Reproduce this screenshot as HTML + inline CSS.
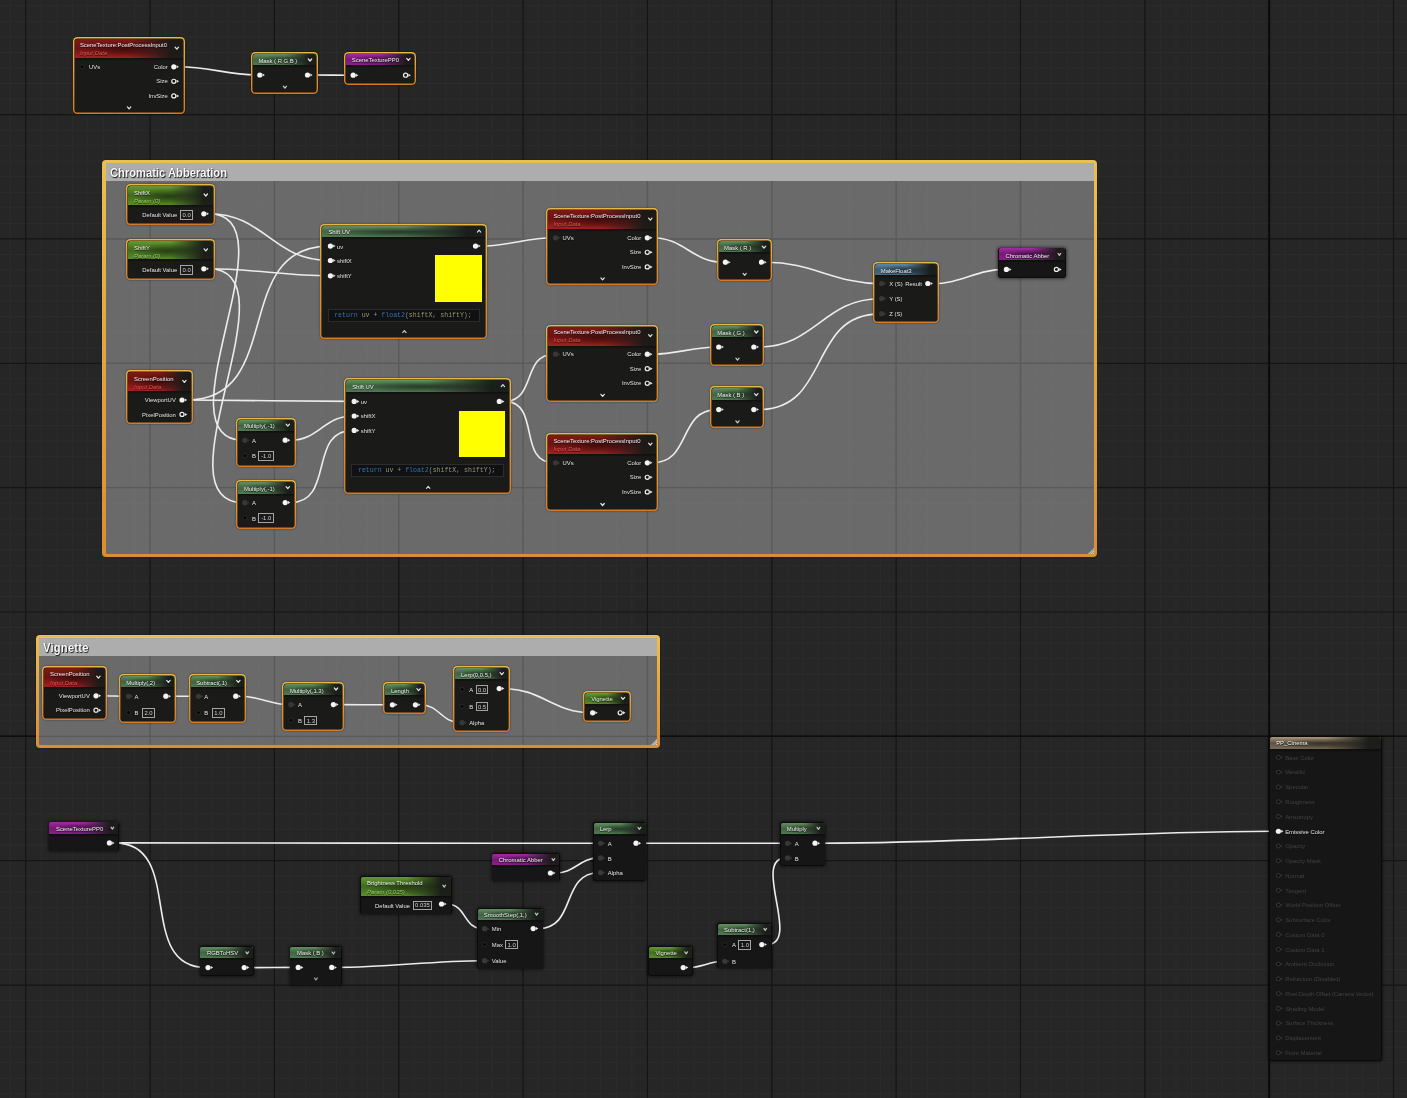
<!DOCTYPE html>
<html><head><meta charset="utf-8"><title>Material Graph</title><style>
html,body{margin:0;padding:0}
body{width:1407px;height:1098px;background:#262626;position:relative;overflow:hidden;font-family:"Liberation Sans",sans-serif}
.layer{position:absolute;left:0;top:0}
.soft{filter:blur(.3px)}
.n{position:absolute;box-sizing:border-box;border-radius:3px;background:#0b0b0b;box-shadow:0 0 3px 1px rgba(0,0,0,.5)}
.n .in{position:absolute;left:.7px;top:.7px;right:.7px;bottom:.7px;background:#161616;border-radius:2px;overflow:hidden}
.n.sel{background:linear-gradient(180deg,#e6b648,#dc9838 50%,#cf7b28);border-radius:4.5px;box-shadow:0 0 2px rgba(0,0,0,.5)}
.n.sel .in{left:2px;top:2px;right:2px;bottom:2px;background:#1a1b19;border-radius:2.5px;box-shadow:0 0 0 .6px #20140a}
.hd{position:absolute;left:0;top:0;right:0}
.hd:after{content:"";position:absolute;left:0;right:0;bottom:-3px;height:3px;background:linear-gradient(180deg,rgba(0,0,0,.45),rgba(0,0,0,0))}
.t{position:absolute;font-size:5.9px;line-height:8px;height:8px;white-space:nowrap;color:#e4e4e4;text-shadow:0 .5px .5px rgba(0,0,0,.7)}
.t.r{width:200px;text-align:right}
.t.c{width:200px;text-align:center}
.t.ti{color:#f0f0f0}
.t.sub{font-style:italic}
.t.red{color:#d85a50}
.t.grn{color:#9bc865}
.t.dis{color:#414141;text-shadow:none}
.bx{position:absolute;box-sizing:border-box;border:.7px solid #a4a4a4;font-size:5.9px;line-height:7.2px;color:#cfcfcf;text-align:center;white-space:nowrap}
.code{position:absolute;box-sizing:border-box;background:#101112;border:.8px solid #2c2c2c;font-family:"Liberation Mono",monospace;font-size:6.55px;line-height:12px;color:#9c9474;white-space:pre;padding-left:5.6px}
.code .kw{color:#3573b0}
.cm{position:absolute;box-sizing:border-box;border-radius:4px;background:linear-gradient(180deg,#ebbf52,#e6a840 40%,#dc8c34);box-shadow:0 0 2px rgba(0,0,0,.4);filter:blur(.3px)}
.cmi{position:absolute;left:3.4px;top:3.3px;right:3.4px;bottom:3.4px;background:#6a6a6a;overflow:hidden;border-radius:1px}
.cmt{position:absolute;left:0;top:0;right:0;height:17.2px;background:#adadad}
.cmtitle{position:absolute;left:7.2px;top:5.7px;font-size:12.6px;line-height:15px;font-weight:bold;color:#fbfbfb;white-space:nowrap;text-shadow:.9px 1.3px 1px rgba(0,0,0,.9),0 0 1.2px rgba(0,0,0,.55);transform-origin:0 50%;transform:scaleX(.888)}
.grip{position:absolute;right:3.6px;bottom:3.6px}
</style></head><body>
<svg class="layer" width="1407" height="1098"><path d="M10.16 0V1098M41.24 0V1098M56.79 0V1098M72.33 0V1098M87.88 0V1098M103.42 0V1098M118.96 0V1098M134.51 0V1098M165.59 0V1098M181.14 0V1098M196.68 0V1098M212.23 0V1098M227.77 0V1098M243.31 0V1098M258.86 0V1098M289.94 0V1098M305.49 0V1098M321.03 0V1098M336.57 0V1098M352.12 0V1098M367.66 0V1098M383.21 0V1098M414.29 0V1098M429.84 0V1098M445.38 0V1098M460.93 0V1098M476.47 0V1098M492.01 0V1098M507.56 0V1098M538.64 0V1098M554.19 0V1098M569.73 0V1098M585.27 0V1098M600.82 0V1098M616.36 0V1098M631.91 0V1098M662.99 0V1098M678.54 0V1098M694.08 0V1098M709.62 0V1098M725.17 0V1098M740.71 0V1098M756.26 0V1098M787.34 0V1098M802.89 0V1098M818.43 0V1098M833.98 0V1098M849.52 0V1098M865.06 0V1098M880.61 0V1098M911.69 0V1098M927.24 0V1098M942.78 0V1098M958.33 0V1098M973.87 0V1098M989.41 0V1098M1004.96 0V1098M1036.04 0V1098M1051.59 0V1098M1067.13 0V1098M1082.68 0V1098M1098.22 0V1098M1113.76 0V1098M1129.31 0V1098M1160.39 0V1098M1175.94 0V1098M1191.48 0V1098M1207.03 0V1098M1222.57 0V1098M1238.11 0V1098M1253.66 0V1098M1284.74 0V1098M1300.29 0V1098M1315.83 0V1098M1331.38 0V1098M1346.92 0V1098M1362.46 0V1098M1378.01 0V1098M0 5.79H1407M0 21.34H1407M0 36.88H1407M0 52.42H1407M0 67.97H1407M0 83.51H1407M0 99.06H1407M0 130.14H1407M0 145.69H1407M0 161.23H1407M0 176.77H1407M0 192.32H1407M0 207.86H1407M0 223.41H1407M0 254.49H1407M0 270.04H1407M0 285.58H1407M0 301.12H1407M0 316.67H1407M0 332.21H1407M0 347.76H1407M0 378.84H1407M0 394.39H1407M0 409.93H1407M0 425.47H1407M0 441.02H1407M0 456.56H1407M0 472.11H1407M0 503.19H1407M0 518.74H1407M0 534.28H1407M0 549.82H1407M0 565.37H1407M0 580.91H1407M0 596.46H1407M0 627.54H1407M0 643.09H1407M0 658.63H1407M0 674.17H1407M0 689.72H1407M0 705.26H1407M0 720.81H1407M0 751.89H1407M0 767.44H1407M0 782.98H1407M0 798.52H1407M0 814.07H1407M0 829.61H1407M0 845.16H1407M0 876.24H1407M0 891.79H1407M0 907.33H1407M0 922.88H1407M0 938.42H1407M0 953.96H1407M0 969.51H1407M0 1000.59H1407M0 1016.14H1407M0 1031.68H1407M0 1047.23H1407M0 1062.77H1407M0 1078.31H1407M0 1093.86H1407" stroke="#2c2c2c" stroke-width="1" fill="none"/><path d="M25.7 0V1098M150.05 0V1098M274.4 0V1098M398.75 0V1098M523.1 0V1098M647.45 0V1098M771.8 0V1098M896.15 0V1098M1020.5 0V1098M1144.85 0V1098M1269.2 0V1098M1393.55 0V1098M0 114.6H1407M0 238.95H1407M0 363.3H1407M0 487.65H1407M0 612H1407M0 736.35H1407M0 860.7H1407M0 985.05H1407" stroke="#151515" stroke-width="1.2" fill="none"/><path d="M1269.2 0V1098" stroke="#0b0b0b" stroke-width="2" fill="none"/><path d="M0 736.3H1407" stroke="#0d0d0d" stroke-width="1.6" fill="none"/></svg>
<div class="cm" style="left:102.4px;top:160.2px;width:994.8px;height:397px"><div class="cmi"><div class="cmt"></div><div class="cmg"></div></div><div class="cmtitle">Chromatic Abberation</div><svg class="grip" width="6" height="6" viewBox="0 0 6 6"><path d="M6 0L6 6L0 6Z" fill="#d6d6d6"/><path d="M1.5 6L6 1.5M3.8 6L6 3.8" stroke="#6a6a6a" stroke-width=".8"/></svg></div><div class="cm" style="left:35.6px;top:635.2px;width:624.8px;height:113.2px"><div class="cmi"><div class="cmt"></div><div class="cmg"></div></div><div class="cmtitle"><span style="letter-spacing:.25px">Vignette</span></div><svg class="grip" width="6" height="6" viewBox="0 0 6 6"><path d="M6 0L6 6L0 6Z" fill="#d6d6d6"/><path d="M1.5 6L6 1.5M3.8 6L6 3.8" stroke="#6a6a6a" stroke-width=".8"/></svg></div>
<svg class="layer" width="1407" height="1098"><defs><clipPath id="cc1"><rect x="106" y="181" width="987.6" height="372.6"/></clipPath></defs><g clip-path="url(#cc1)"><path d="M10.16 0V1098M41.24 0V1098M56.79 0V1098M72.33 0V1098M87.88 0V1098M103.42 0V1098M118.96 0V1098M134.51 0V1098M165.59 0V1098M181.14 0V1098M196.68 0V1098M212.23 0V1098M227.77 0V1098M243.31 0V1098M258.86 0V1098M289.94 0V1098M305.49 0V1098M321.03 0V1098M336.57 0V1098M352.12 0V1098M367.66 0V1098M383.21 0V1098M414.29 0V1098M429.84 0V1098M445.38 0V1098M460.93 0V1098M476.47 0V1098M492.01 0V1098M507.56 0V1098M538.64 0V1098M554.19 0V1098M569.73 0V1098M585.27 0V1098M600.82 0V1098M616.36 0V1098M631.91 0V1098M662.99 0V1098M678.54 0V1098M694.08 0V1098M709.62 0V1098M725.17 0V1098M740.71 0V1098M756.26 0V1098M787.34 0V1098M802.89 0V1098M818.43 0V1098M833.98 0V1098M849.52 0V1098M865.06 0V1098M880.61 0V1098M911.69 0V1098M927.24 0V1098M942.78 0V1098M958.33 0V1098M973.87 0V1098M989.41 0V1098M1004.96 0V1098M1036.04 0V1098M1051.59 0V1098M1067.13 0V1098M1082.68 0V1098M1098.22 0V1098M1113.76 0V1098M1129.31 0V1098M1160.39 0V1098M1175.94 0V1098M1191.48 0V1098M1207.03 0V1098M1222.57 0V1098M1238.11 0V1098M1253.66 0V1098M1284.74 0V1098M1300.29 0V1098M1315.83 0V1098M1331.38 0V1098M1346.92 0V1098M1362.46 0V1098M1378.01 0V1098M0 5.79H1407M0 21.34H1407M0 36.88H1407M0 52.42H1407M0 67.97H1407M0 83.51H1407M0 99.06H1407M0 130.14H1407M0 145.69H1407M0 161.23H1407M0 176.77H1407M0 192.32H1407M0 207.86H1407M0 223.41H1407M0 254.49H1407M0 270.04H1407M0 285.58H1407M0 301.12H1407M0 316.67H1407M0 332.21H1407M0 347.76H1407M0 378.84H1407M0 394.39H1407M0 409.93H1407M0 425.47H1407M0 441.02H1407M0 456.56H1407M0 472.11H1407M0 503.19H1407M0 518.74H1407M0 534.28H1407M0 549.82H1407M0 565.37H1407M0 580.91H1407M0 596.46H1407M0 627.54H1407M0 643.09H1407M0 658.63H1407M0 674.17H1407M0 689.72H1407M0 705.26H1407M0 720.81H1407M0 751.89H1407M0 767.44H1407M0 782.98H1407M0 798.52H1407M0 814.07H1407M0 829.61H1407M0 845.16H1407M0 876.24H1407M0 891.79H1407M0 907.33H1407M0 922.88H1407M0 938.42H1407M0 953.96H1407M0 969.51H1407M0 1000.59H1407M0 1016.14H1407M0 1031.68H1407M0 1047.23H1407M0 1062.77H1407M0 1078.31H1407M0 1093.86H1407" stroke="#707070" stroke-width="1" fill="none" opacity=".55"/><path d="M25.7 0V1098M150.05 0V1098M274.4 0V1098M398.75 0V1098M523.1 0V1098M647.45 0V1098M771.8 0V1098M896.15 0V1098M1020.5 0V1098M1144.85 0V1098M1269.2 0V1098M1393.55 0V1098M0 114.6H1407M0 238.95H1407M0 363.3H1407M0 487.65H1407M0 612H1407M0 736.35H1407M0 860.7H1407M0 985.05H1407" stroke="#5a5a5a" stroke-width="1.4" fill="none"/></g></svg>
<svg class="layer" width="1407" height="1098"><defs><clipPath id="cc2"><rect x="39.2" y="656" width="617.6" height="88.8"/></clipPath></defs><g clip-path="url(#cc2)"><path d="M10.16 0V1098M41.24 0V1098M56.79 0V1098M72.33 0V1098M87.88 0V1098M103.42 0V1098M118.96 0V1098M134.51 0V1098M165.59 0V1098M181.14 0V1098M196.68 0V1098M212.23 0V1098M227.77 0V1098M243.31 0V1098M258.86 0V1098M289.94 0V1098M305.49 0V1098M321.03 0V1098M336.57 0V1098M352.12 0V1098M367.66 0V1098M383.21 0V1098M414.29 0V1098M429.84 0V1098M445.38 0V1098M460.93 0V1098M476.47 0V1098M492.01 0V1098M507.56 0V1098M538.64 0V1098M554.19 0V1098M569.73 0V1098M585.27 0V1098M600.82 0V1098M616.36 0V1098M631.91 0V1098M662.99 0V1098M678.54 0V1098M694.08 0V1098M709.62 0V1098M725.17 0V1098M740.71 0V1098M756.26 0V1098M787.34 0V1098M802.89 0V1098M818.43 0V1098M833.98 0V1098M849.52 0V1098M865.06 0V1098M880.61 0V1098M911.69 0V1098M927.24 0V1098M942.78 0V1098M958.33 0V1098M973.87 0V1098M989.41 0V1098M1004.96 0V1098M1036.04 0V1098M1051.59 0V1098M1067.13 0V1098M1082.68 0V1098M1098.22 0V1098M1113.76 0V1098M1129.31 0V1098M1160.39 0V1098M1175.94 0V1098M1191.48 0V1098M1207.03 0V1098M1222.57 0V1098M1238.11 0V1098M1253.66 0V1098M1284.74 0V1098M1300.29 0V1098M1315.83 0V1098M1331.38 0V1098M1346.92 0V1098M1362.46 0V1098M1378.01 0V1098M0 5.79H1407M0 21.34H1407M0 36.88H1407M0 52.42H1407M0 67.97H1407M0 83.51H1407M0 99.06H1407M0 130.14H1407M0 145.69H1407M0 161.23H1407M0 176.77H1407M0 192.32H1407M0 207.86H1407M0 223.41H1407M0 254.49H1407M0 270.04H1407M0 285.58H1407M0 301.12H1407M0 316.67H1407M0 332.21H1407M0 347.76H1407M0 378.84H1407M0 394.39H1407M0 409.93H1407M0 425.47H1407M0 441.02H1407M0 456.56H1407M0 472.11H1407M0 503.19H1407M0 518.74H1407M0 534.28H1407M0 549.82H1407M0 565.37H1407M0 580.91H1407M0 596.46H1407M0 627.54H1407M0 643.09H1407M0 658.63H1407M0 674.17H1407M0 689.72H1407M0 705.26H1407M0 720.81H1407M0 751.89H1407M0 767.44H1407M0 782.98H1407M0 798.52H1407M0 814.07H1407M0 829.61H1407M0 845.16H1407M0 876.24H1407M0 891.79H1407M0 907.33H1407M0 922.88H1407M0 938.42H1407M0 953.96H1407M0 969.51H1407M0 1000.59H1407M0 1016.14H1407M0 1031.68H1407M0 1047.23H1407M0 1062.77H1407M0 1078.31H1407M0 1093.86H1407" stroke="#707070" stroke-width="1" fill="none" opacity=".55"/><path d="M25.7 0V1098M150.05 0V1098M274.4 0V1098M398.75 0V1098M523.1 0V1098M647.45 0V1098M771.8 0V1098M896.15 0V1098M1020.5 0V1098M1144.85 0V1098M1269.2 0V1098M1393.55 0V1098M0 114.6H1407M0 238.95H1407M0 363.3H1407M0 487.65H1407M0 612H1407M0 736.35H1407M0 860.7H1407M0 985.05H1407" stroke="#5a5a5a" stroke-width="1.4" fill="none"/></g></svg>
<svg class="layer" width="1407" height="1098"><g fill="none" stroke="#ececec" stroke-width="1.6" stroke-linecap="round"><path d="M178.8 66.8C208.03 66.8 229.07 75 258.3 75"/><path d="M312.5 75C325.63 75 338.57 75.2 351.7 75.2"/><path d="M208.8 213.8C264.4 213.8 273.3 260.5 328.9 260.5"/><path d="M208.8 213.8C295.83 213.8 156.37 440.3 243.4 440.3"/><path d="M208.8 268.8C251.17 268.8 286.53 275.8 328.9 275.8"/><path d="M208.8 268.8C298.3 268.8 153.9 502.7 243.4 502.7"/><path d="M187 400C285.6 400 230.3 246.1 328.9 246.1"/><path d="M187 400C242.7 400 297 401.4 352.7 401.4"/><path d="M290.2 440.2C319.1 440.2 323.8 416 352.7 416"/><path d="M290.2 502.6C335.1 502.6 307.8 430.4 352.7 430.4"/><path d="M480.5 246.1C507.77 246.1 526.73 237.8 554 237.8"/><path d="M504.3 401.4C536.6 401.4 521.7 354.2 554 354.2"/><path d="M504.3 401.4C541.33 401.4 516.97 462.8 554 462.8"/><path d="M652.3 237.8C684.3 237.8 691.9 262.2 723.9 262.2"/><path d="M652.3 354.2C676.33 354.2 693.17 347 717.2 347"/><path d="M652.3 462.8C691.67 462.8 677.83 409.6 717.2 409.6"/><path d="M766.5 262.2C811.53 262.2 835.07 283.7 880.1 283.7"/><path d="M758.8 347C815.3 347 823.6 298.8 880.1 298.8"/><path d="M758.8 409.6C831.13 409.6 807.77 313.9 880.1 313.9"/><path d="M932.8 283.7C961.6 283.7 976.1 269.4 1004.9 269.4"/><path d="M101 695.8C109.87 695.8 118.23 696.3 127.1 696.3"/><path d="M170.8 696.2C179.57 696.2 188.23 696.3 197 696.3"/><path d="M240.7 696.2C259.77 696.2 270.33 704.7 289.4 704.7"/><path d="M338.4 704.6C355.97 704.6 373.33 704.8 390.9 704.8"/><path d="M420.4 704.8C439.77 704.8 441.23 722.7 460.6 722.7"/><path d="M504.2 688.6C541.23 688.6 554.07 712.8 591.1 712.8"/><path d="M114.4 842.9C276.1 842.9 437.4 843.3 599.1 843.3"/><path d="M114.4 842.9C186.67 842.9 134.23 967.6 206.5 967.6"/><path d="M249.2 967.6C265.1 967.6 280.8 967.4 296.7 967.4"/><path d="M336.7 967.4C387.73 967.4 432.07 960.7 483.1 960.7"/><path d="M446.5 904C466.93 904 462.67 928.7 483.1 928.7"/><path d="M538.2 928.6C577.13 928.6 560.17 872.7 599.1 872.7"/><path d="M555.4 873C575 873 579.5 857.9 599.1 857.9"/><path d="M641 843.2C689.4 843.2 737.7 843.3 786.1 843.3"/><path d="M688.2 967.6C702 967.6 709.5 961.3 723.3 961.3"/><path d="M766.8 944.6C802.13 944.6 750.77 857.9 786.1 857.9"/><path d="M820 843.2C976.29 843.2 1120.61 831.23 1276.9 831.23"/></g></svg>
<div class="layer soft" style="width:1407px;height:1098px"><div class="n sel" style="left:72.8px;top:37.2px;width:111.8px;height:77px"><div class="in"><div class="hd" style="height:19.2px;background:linear-gradient(90deg,rgba(24,26,23,0) 50%,rgba(24,26,23,.95) 89%),radial-gradient(ellipse 40% 46% at 47% 56%,rgba(0,0,0,.42),rgba(0,0,0,0)),linear-gradient(180deg,#7e1818,#6e1313 50%,#a42222)"></div></div></div><div class="t ti" style="left:79.9px;top:40.7px;">SceneTexture:PostProcessInput0</div><div class="t sub red" style="left:79.9px;top:48.7px;">Input Data</div><div class="t " style="left:89px;top:62.8px;">UVs</div><div class="t r " style="left:-32.2px;top:62.8px;">Color</div><div class="t r " style="left:-32.2px;top:77.3px;">Size</div><div class="t r " style="left:-32.2px;top:91.9px;">InvSize</div><div class="n sel" style="left:251px;top:51.6px;width:67px;height:42px"><div class="in"><div class="hd" style="height:11.6px;background:linear-gradient(90deg,rgba(24,26,23,0) 50%,rgba(24,26,23,.95) 89%),radial-gradient(ellipse 40% 46% at 47% 56%,rgba(0,0,0,.42),rgba(0,0,0,0)),linear-gradient(180deg,#628f60,#426444 50%,#4f7a50)"></div></div></div><div class="t ti" style="left:258.4px;top:56.5px;">Mask ( R G B )</div><div class="n sel" style="left:344px;top:51.8px;width:72.4px;height:33px"><div class="in"><div class="hd" style="height:11.4px;background:linear-gradient(90deg,rgba(24,26,23,0) 50%,rgba(24,26,23,.95) 89%),radial-gradient(ellipse 40% 46% at 47% 56%,rgba(0,0,0,.42),rgba(0,0,0,0)),linear-gradient(180deg,#a02c9f,#741a74 50%,#8a2089)"></div></div></div><div class="t ti" style="left:351.8px;top:56.4px;">SceneTexturePP0</div><div class="n sel" style="left:126.2px;top:184px;width:88.6px;height:41.2px"><div class="in"><div class="hd" style="height:18.6px;background:linear-gradient(90deg,rgba(24,26,23,0) 50%,rgba(24,26,23,.95) 89%),radial-gradient(ellipse 40% 46% at 47% 56%,rgba(0,0,0,.42),rgba(0,0,0,0)),linear-gradient(180deg,#659a30,#3f6a20 50%,#5a8e2c)"></div></div></div><div class="t ti" style="left:134.1px;top:188.8px;">ShiftX</div><div class="t sub grn" style="left:134.1px;top:197.3px;">Param (0)</div><div class="t " style="left:142.3px;top:211px;">Default Value</div><div class="bx" style="left:180.1px;top:209.9px;width:13px;height:9.9px;line-height:8.6px">0.0</div><div class="n sel" style="left:126.2px;top:238.8px;width:88.6px;height:41.4px"><div class="in"><div class="hd" style="height:18.6px;background:linear-gradient(90deg,rgba(24,26,23,0) 50%,rgba(24,26,23,.95) 89%),radial-gradient(ellipse 40% 46% at 47% 56%,rgba(0,0,0,.42),rgba(0,0,0,0)),linear-gradient(180deg,#659a30,#3f6a20 50%,#5a8e2c)"></div></div></div><div class="t ti" style="left:134.1px;top:243.6px;">ShiftY</div><div class="t sub grn" style="left:134.1px;top:252.1px;">Param (0)</div><div class="t " style="left:142.3px;top:266px;">Default Value</div><div class="bx" style="left:180.1px;top:264.9px;width:13px;height:9.9px;line-height:8.6px">0.0</div><div class="n sel" style="left:320.4px;top:224px;width:166.5px;height:115px"><div class="in"><div class="hd" style="height:11.2px;background:linear-gradient(90deg,rgba(24,26,23,0) 50%,rgba(24,26,23,.95) 89%),radial-gradient(ellipse 40% 46% at 47% 56%,rgba(0,0,0,.42),rgba(0,0,0,0)),linear-gradient(180deg,#628f60,#426444 50%,#4f7a50)"></div></div></div><div class="t ti" style="left:328.4px;top:228.2px;">Shift UV</div><div class="t " style="left:337px;top:242.5px;">uv</div><div class="t " style="left:337px;top:256.9px;">shiftX</div><div class="t " style="left:337px;top:272.2px;">shiftY</div><div style="position:absolute;left:435.2px;top:254.6px;width:47.3px;height:47.6px;background:#ffff00"></div><div class="code" style="left:327.6px;top:308.7px;width:152.4px;height:13.2px"><span class="kw">return</span> uv + <span class="kw">float2</span>(shiftX, shiftY);</div><div class="n sel" style="left:344.2px;top:378.4px;width:166.5px;height:115.8px"><div class="in"><div class="hd" style="height:11.2px;background:linear-gradient(90deg,rgba(24,26,23,0) 50%,rgba(24,26,23,.95) 89%),radial-gradient(ellipse 40% 46% at 47% 56%,rgba(0,0,0,.42),rgba(0,0,0,0)),linear-gradient(180deg,#628f60,#426444 50%,#4f7a50)"></div></div></div><div class="t ti" style="left:352.2px;top:382.6px;">Shift UV</div><div class="t " style="left:360.8px;top:397.8px;">uv</div><div class="t " style="left:360.8px;top:412.4px;">shiftX</div><div class="t " style="left:360.8px;top:426.8px;">shiftY</div><div style="position:absolute;left:459px;top:411.1px;width:46.3px;height:46.3px;background:#ffff00"></div><div class="code" style="left:351.4px;top:464.2px;width:152.4px;height:13.2px"><span class="kw">return</span> uv + <span class="kw">float2</span>(shiftX, shiftY);</div><div class="n sel" style="left:126.2px;top:370.4px;width:67.2px;height:54px"><div class="in"><div class="hd" style="height:19px;background:linear-gradient(90deg,rgba(24,26,23,0) 50%,rgba(24,26,23,.95) 89%),radial-gradient(ellipse 40% 46% at 47% 56%,rgba(0,0,0,.42),rgba(0,0,0,0)),linear-gradient(180deg,#7e1818,#6e1313 50%,#a42222)"></div></div></div><div class="t ti" style="left:134px;top:374.6px;">ScreenPosition</div><div class="t sub red" style="left:134px;top:383px;">Input Data</div><div class="t r " style="left:-24.2px;top:396.2px;">ViewportUV</div><div class="t r " style="left:-24.2px;top:410.6px;">PixelPosition</div><div class="n sel" style="left:236.2px;top:417.7px;width:59.6px;height:49px"><div class="in"><div class="hd" style="height:11.3px;background:linear-gradient(90deg,rgba(24,26,23,0) 50%,rgba(24,26,23,.95) 89%),radial-gradient(ellipse 40% 46% at 47% 56%,rgba(0,0,0,.42),rgba(0,0,0,0)),linear-gradient(180deg,#628f60,#426444 50%,#4f7a50)"></div></div></div><div class="t ti" style="left:243.9px;top:422px;">Multiply(,-1)</div><div class="t " style="left:252px;top:436.9px;">A</div><div class="t " style="left:252px;top:452.4px;">B</div><div class="bx" style="left:258.4px;top:451.2px;width:15.7px;height:9.5px;line-height:8.1px">-1.0</div><div class="n sel" style="left:236.2px;top:480.3px;width:59.6px;height:48.7px"><div class="in"><div class="hd" style="height:11.3px;background:linear-gradient(90deg,rgba(24,26,23,0) 50%,rgba(24,26,23,.95) 89%),radial-gradient(ellipse 40% 46% at 47% 56%,rgba(0,0,0,.42),rgba(0,0,0,0)),linear-gradient(180deg,#628f60,#426444 50%,#4f7a50)"></div></div></div><div class="t ti" style="left:243.9px;top:485px;">Multiply(,-1)</div><div class="t " style="left:252px;top:499.3px;">A</div><div class="t " style="left:252px;top:514.5px;">B</div><div class="bx" style="left:258.4px;top:513.3px;width:15.7px;height:9.5px;line-height:8.1px">-1.0</div><div class="n sel" style="left:546.3px;top:208.2px;width:111.8px;height:77px"><div class="in"><div class="hd" style="height:19.2px;background:linear-gradient(90deg,rgba(24,26,23,0) 50%,rgba(24,26,23,.95) 89%),radial-gradient(ellipse 40% 46% at 47% 56%,rgba(0,0,0,.42),rgba(0,0,0,0)),linear-gradient(180deg,#7e1818,#6e1313 50%,#a42222)"></div></div></div><div class="t ti" style="left:553.4px;top:211.7px;">SceneTexture:PostProcessInput0</div><div class="t sub red" style="left:553.4px;top:219.7px;">Input Data</div><div class="t " style="left:562.5px;top:233.8px;">UVs</div><div class="t r " style="left:441.3px;top:233.8px;">Color</div><div class="t r " style="left:441.3px;top:248.3px;">Size</div><div class="t r " style="left:441.3px;top:262.9px;">InvSize</div><div class="n sel" style="left:546.3px;top:324.6px;width:111.8px;height:77px"><div class="in"><div class="hd" style="height:19.2px;background:linear-gradient(90deg,rgba(24,26,23,0) 50%,rgba(24,26,23,.95) 89%),radial-gradient(ellipse 40% 46% at 47% 56%,rgba(0,0,0,.42),rgba(0,0,0,0)),linear-gradient(180deg,#7e1818,#6e1313 50%,#a42222)"></div></div></div><div class="t ti" style="left:553.4px;top:328.1px;">SceneTexture:PostProcessInput0</div><div class="t sub red" style="left:553.4px;top:336.1px;">Input Data</div><div class="t " style="left:562.5px;top:350.2px;">UVs</div><div class="t r " style="left:441.3px;top:350.2px;">Color</div><div class="t r " style="left:441.3px;top:364.7px;">Size</div><div class="t r " style="left:441.3px;top:379.3px;">InvSize</div><div class="n sel" style="left:546.3px;top:433.2px;width:111.8px;height:78px"><div class="in"><div class="hd" style="height:19.2px;background:linear-gradient(90deg,rgba(24,26,23,0) 50%,rgba(24,26,23,.95) 89%),radial-gradient(ellipse 40% 46% at 47% 56%,rgba(0,0,0,.42),rgba(0,0,0,0)),linear-gradient(180deg,#7e1818,#6e1313 50%,#a42222)"></div></div></div><div class="t ti" style="left:553.4px;top:436.7px;">SceneTexture:PostProcessInput0</div><div class="t sub red" style="left:553.4px;top:444.7px;">Input Data</div><div class="t " style="left:562.5px;top:458.8px;">UVs</div><div class="t r " style="left:441.3px;top:458.8px;">Color</div><div class="t r " style="left:441.3px;top:473.3px;">Size</div><div class="t r " style="left:441.3px;top:487.9px;">InvSize</div><div class="n sel" style="left:716.6px;top:238.8px;width:55.4px;height:42px"><div class="in"><div class="hd" style="height:11.6px;background:linear-gradient(90deg,rgba(24,26,23,0) 50%,rgba(24,26,23,.95) 89%),radial-gradient(ellipse 40% 46% at 47% 56%,rgba(0,0,0,.42),rgba(0,0,0,0)),linear-gradient(180deg,#628f60,#426444 50%,#4f7a50)"></div></div></div><div class="t ti" style="left:724px;top:243.7px;">Mask ( R )</div><div class="n sel" style="left:709.9px;top:323.6px;width:54.4px;height:42px"><div class="in"><div class="hd" style="height:11.6px;background:linear-gradient(90deg,rgba(24,26,23,0) 50%,rgba(24,26,23,.95) 89%),radial-gradient(ellipse 40% 46% at 47% 56%,rgba(0,0,0,.42),rgba(0,0,0,0)),linear-gradient(180deg,#628f60,#426444 50%,#4f7a50)"></div></div></div><div class="t ti" style="left:717.3px;top:328.5px;">Mask ( G )</div><div class="n sel" style="left:709.9px;top:386.2px;width:54.4px;height:42px"><div class="in"><div class="hd" style="height:11.6px;background:linear-gradient(90deg,rgba(24,26,23,0) 50%,rgba(24,26,23,.95) 89%),radial-gradient(ellipse 40% 46% at 47% 56%,rgba(0,0,0,.42),rgba(0,0,0,0)),linear-gradient(180deg,#628f60,#426444 50%,#4f7a50)"></div></div></div><div class="t ti" style="left:717.3px;top:391.1px;">Mask ( B )</div><div class="n sel" style="left:872.6px;top:262.3px;width:66.4px;height:61.1px"><div class="in"><div class="hd" style="height:10.8px;background:linear-gradient(90deg,rgba(24,26,23,0) 50%,rgba(24,26,23,.95) 89%),radial-gradient(ellipse 40% 46% at 47% 56%,rgba(0,0,0,.42),rgba(0,0,0,0)),linear-gradient(180deg,#5d89a8,#3c5c72 50%,#456a84)"></div></div></div><div class="t ti" style="left:880.8px;top:266.7px;">MakeFloat3</div><div class="t " style="left:889.2px;top:280px;">X (S)</div><div class="t " style="left:889.2px;top:295.1px;">Y (S)</div><div class="t " style="left:889.2px;top:310.2px;">Z (S)</div><div class="t r " style="left:722px;top:280px;">Result</div><div class="n" style="left:998.1px;top:247.7px;width:68px;height:30px"><div class="in"><div class="hd" style="height:11.4px;background:linear-gradient(90deg,rgba(24,26,23,0) 50%,rgba(24,26,23,.95) 89%),radial-gradient(ellipse 40% 46% at 47% 56%,rgba(0,0,0,.42),rgba(0,0,0,0)),linear-gradient(180deg,#a02c9f,#741a74 50%,#8a2089)"></div></div></div><div class="t ti" style="left:1005.4px;top:252.1px;">Chromatic Abber</div><div class="n sel" style="left:42.2px;top:666.2px;width:65.2px;height:54.2px"><div class="in"><div class="hd" style="height:19px;background:linear-gradient(90deg,rgba(24,26,23,0) 50%,rgba(24,26,23,.95) 89%),radial-gradient(ellipse 40% 46% at 47% 56%,rgba(0,0,0,.42),rgba(0,0,0,0)),linear-gradient(180deg,#7e1818,#6e1313 50%,#a42222)"></div></div></div><div class="t ti" style="left:50px;top:670.4px;">ScreenPosition</div><div class="t sub red" style="left:50px;top:678.8px;">Input Data</div><div class="t r " style="left:-110.2px;top:692px;">ViewportUV</div><div class="t r " style="left:-110.2px;top:706.4px;">PixelPosition</div><div class="n sel" style="left:118.6px;top:674px;width:57.8px;height:49.4px"><div class="in"><div class="hd" style="height:11.3px;background:linear-gradient(90deg,rgba(24,26,23,0) 50%,rgba(24,26,23,.95) 89%),radial-gradient(ellipse 40% 46% at 47% 56%,rgba(0,0,0,.42),rgba(0,0,0,0)),linear-gradient(180deg,#628f60,#426444 50%,#4f7a50)"></div></div></div><div class="t ti" style="left:126.3px;top:679.3px;">Multiply(,2)</div><div class="t " style="left:134.4px;top:692.9px;">A</div><div class="t " style="left:134.4px;top:709.3px;">B</div><div class="bx" style="left:142.1px;top:708.1px;width:12.9px;height:9.5px;line-height:8.1px">2.0</div><div class="n sel" style="left:188.5px;top:674px;width:57.8px;height:49.4px"><div class="in"><div class="hd" style="height:11.3px;background:linear-gradient(90deg,rgba(24,26,23,0) 50%,rgba(24,26,23,.95) 89%),radial-gradient(ellipse 40% 46% at 47% 56%,rgba(0,0,0,.42),rgba(0,0,0,0)),linear-gradient(180deg,#628f60,#426444 50%,#4f7a50)"></div></div></div><div class="t ti" style="left:196.2px;top:679.3px;">Subtract(,1)</div><div class="t " style="left:204.3px;top:692.9px;">A</div><div class="t " style="left:204.3px;top:709.3px;">B</div><div class="bx" style="left:212px;top:708.1px;width:12.9px;height:9.5px;line-height:8.1px">1.0</div><div class="n sel" style="left:282.2px;top:681.6px;width:61.8px;height:49.6px"><div class="in"><div class="hd" style="height:11.3px;background:linear-gradient(90deg,rgba(24,26,23,0) 50%,rgba(24,26,23,.95) 89%),radial-gradient(ellipse 40% 46% at 47% 56%,rgba(0,0,0,.42),rgba(0,0,0,0)),linear-gradient(180deg,#628f60,#426444 50%,#4f7a50)"></div></div></div><div class="t ti" style="left:289.9px;top:686.9px;">Multiply(,1.3)</div><div class="t " style="left:298px;top:701.3px;">A</div><div class="t " style="left:298px;top:716.9px;">B</div><div class="bx" style="left:304.4px;top:715.7px;width:12.9px;height:9.5px;line-height:8.1px">1.3</div><div class="n sel" style="left:383.2px;top:682px;width:43px;height:31.8px"><div class="in"><div class="hd" style="height:11.4px;background:linear-gradient(90deg,rgba(24,26,23,0) 50%,rgba(24,26,23,.95) 89%),radial-gradient(ellipse 40% 46% at 47% 56%,rgba(0,0,0,.42),rgba(0,0,0,0)),linear-gradient(180deg,#628f60,#426444 50%,#4f7a50)"></div></div></div><div class="t ti" style="left:391px;top:686.8px;">Length</div><div class="n sel" style="left:453.4px;top:666.2px;width:56.4px;height:65.4px"><div class="in"><div class="hd" style="height:11.3px;background:linear-gradient(90deg,rgba(24,26,23,0) 50%,rgba(24,26,23,.95) 89%),radial-gradient(ellipse 40% 46% at 47% 56%,rgba(0,0,0,.42),rgba(0,0,0,0)),linear-gradient(180deg,#628f60,#426444 50%,#4f7a50)"></div></div></div><div class="t ti" style="left:461.1px;top:670.9px;">Lerp(0,0.5,)</div><div class="t " style="left:469.2px;top:686.1px;">A</div><div class="bx" style="left:475.6px;top:684.9px;width:12.9px;height:9.5px;line-height:8.1px">0.0</div><div class="t " style="left:469.2px;top:702.9px;">B</div><div class="bx" style="left:475.6px;top:701.7px;width:12.9px;height:9.5px;line-height:8.1px">0.5</div><div class="t " style="left:469.2px;top:719.3px;">Alpha</div><div class="n sel" style="left:583.4px;top:690.8px;width:47.6px;height:31.6px"><div class="in"><div class="hd" style="height:11.4px;background:linear-gradient(90deg,rgba(24,26,23,0) 50%,rgba(24,26,23,.95) 89%),radial-gradient(ellipse 40% 46% at 47% 56%,rgba(0,0,0,.42),rgba(0,0,0,0)),linear-gradient(180deg,#659c2e,#44701f 50%,#568a28)"></div></div></div><div class="t ti" style="left:591.2px;top:695.4px;">Vignette</div><div class="n" style="left:48.7px;top:821.5px;width:70.4px;height:29.7px"><div class="in"><div class="hd" style="height:11.4px;background:linear-gradient(90deg,rgba(24,26,23,0) 50%,rgba(24,26,23,.95) 89%),radial-gradient(ellipse 40% 46% at 47% 56%,rgba(0,0,0,.42),rgba(0,0,0,0)),linear-gradient(180deg,#a02c9f,#741a74 50%,#8a2089)"></div></div></div><div class="t ti" style="left:56px;top:824.6px;">SceneTexturePP0</div><div class="n" style="left:199.7px;top:946.1px;width:54.2px;height:29.8px"><div class="in"><div class="hd" style="height:11.4px;background:linear-gradient(90deg,rgba(24,26,23,0) 50%,rgba(24,26,23,.95) 89%),radial-gradient(ellipse 40% 46% at 47% 56%,rgba(0,0,0,.42),rgba(0,0,0,0)),linear-gradient(180deg,#628f60,#426444 50%,#4f7a50)"></div></div></div><div class="t ti" style="left:207px;top:949.2px;">RGBToHSV</div><div class="n" style="left:289.7px;top:946.1px;width:52.4px;height:39.2px"><div class="in"><div class="hd" style="height:11.4px;background:linear-gradient(90deg,rgba(24,26,23,0) 50%,rgba(24,26,23,.95) 89%),radial-gradient(ellipse 40% 46% at 47% 56%,rgba(0,0,0,.42),rgba(0,0,0,0)),linear-gradient(180deg,#628f60,#426444 50%,#4f7a50)"></div></div></div><div class="t ti" style="left:297px;top:949.4px;">Mask ( B )</div><div class="n" style="left:359.9px;top:875.9px;width:92px;height:38.6px"><div class="in"><div class="hd" style="height:19.2px;background:linear-gradient(90deg,rgba(24,26,23,0) 50%,rgba(24,26,23,.95) 89%),radial-gradient(ellipse 40% 46% at 47% 56%,rgba(0,0,0,.42),rgba(0,0,0,0)),linear-gradient(180deg,#659a30,#3f6a20 50%,#5a8e2c)"></div></div></div><div class="t ti" style="left:367px;top:879px;">Brightness Threshold</div><div class="t sub grn" style="left:367px;top:887.6px;">Param (0.035)</div><div class="t " style="left:375px;top:901.9px;">Default Value</div><div class="bx" style="left:412.8px;top:900.8px;width:19.2px;height:9.2px;line-height:7.8px">0.035</div><div class="n" style="left:491.5px;top:852.9px;width:68.6px;height:28.4px"><div class="in"><div class="hd" style="height:11.4px;background:linear-gradient(90deg,rgba(24,26,23,0) 50%,rgba(24,26,23,.95) 89%),radial-gradient(ellipse 40% 46% at 47% 56%,rgba(0,0,0,.42),rgba(0,0,0,0)),linear-gradient(180deg,#a02c9f,#741a74 50%,#8a2089)"></div></div></div><div class="t ti" style="left:498.8px;top:856px;">Chromatic Abber</div><div class="n" style="left:476.9px;top:908.1px;width:66.6px;height:61.2px"><div class="in"><div class="hd" style="height:11.2px;background:linear-gradient(90deg,rgba(24,26,23,0) 50%,rgba(24,26,23,.95) 89%),radial-gradient(ellipse 40% 46% at 47% 56%,rgba(0,0,0,.42),rgba(0,0,0,0)),linear-gradient(180deg,#628f60,#426444 50%,#4f7a50)"></div></div></div><div class="t ti" style="left:483.8px;top:910.9px;">SmoothStep(,1,)</div><div class="t " style="left:491.8px;top:925.3px;">Min</div><div class="t " style="left:491.8px;top:941.1px;">Max</div><div class="bx" style="left:505.2px;top:939.9px;width:12.9px;height:9.5px;line-height:8.1px">1.0</div><div class="t " style="left:491.8px;top:957.3px;">Value</div><div class="n" style="left:592.9px;top:822.2px;width:53.4px;height:58.9px"><div class="in"><div class="hd" style="height:11.2px;background:linear-gradient(90deg,rgba(24,26,23,0) 50%,rgba(24,26,23,.95) 89%),radial-gradient(ellipse 40% 46% at 47% 56%,rgba(0,0,0,.42),rgba(0,0,0,0)),linear-gradient(180deg,#628f60,#426444 50%,#4f7a50)"></div></div></div><div class="t ti" style="left:599.8px;top:825px;">Lerp</div><div class="t " style="left:607.8px;top:839.9px;">A</div><div class="t " style="left:607.8px;top:854.5px;">B</div><div class="t " style="left:607.8px;top:869.3px;">Alpha</div><div class="n" style="left:779.9px;top:822.2px;width:45.4px;height:43.5px"><div class="in"><div class="hd" style="height:11.2px;background:linear-gradient(90deg,rgba(24,26,23,0) 50%,rgba(24,26,23,.95) 89%),radial-gradient(ellipse 40% 46% at 47% 56%,rgba(0,0,0,.42),rgba(0,0,0,0)),linear-gradient(180deg,#628f60,#426444 50%,#4f7a50)"></div></div></div><div class="t ti" style="left:786.8px;top:825px;">Multiply</div><div class="t " style="left:794.8px;top:839.9px;">A</div><div class="t " style="left:794.8px;top:854.5px;">B</div><div class="n" style="left:717.1px;top:923.3px;width:55px;height:45.2px"><div class="in"><div class="hd" style="height:11.2px;background:linear-gradient(90deg,rgba(24,26,23,0) 50%,rgba(24,26,23,.95) 89%),radial-gradient(ellipse 40% 46% at 47% 56%,rgba(0,0,0,.42),rgba(0,0,0,0)),linear-gradient(180deg,#628f60,#426444 50%,#4f7a50)"></div></div></div><div class="t ti" style="left:724px;top:926.1px;">Subtract(1,)</div><div class="t " style="left:732px;top:941.3px;">A</div><div class="bx" style="left:738.4px;top:940.1px;width:12.9px;height:9.5px;line-height:8.1px">1.0</div><div class="t " style="left:732px;top:957.9px;">B</div><div class="n" style="left:648.1px;top:946.1px;width:44.8px;height:29.8px"><div class="in"><div class="hd" style="height:11.4px;background:linear-gradient(90deg,rgba(24,26,23,0) 50%,rgba(24,26,23,.95) 89%),radial-gradient(ellipse 40% 46% at 47% 56%,rgba(0,0,0,.42),rgba(0,0,0,0)),linear-gradient(180deg,#659c2e,#44701f 50%,#568a28)"></div></div></div><div class="t ti" style="left:655.4px;top:949.2px;">Vignette</div><div class="n" style="left:1269.1px;top:736.5px;width:112.8px;height:324.4px"><div class="in"><div class="hd" style="height:11.6px;background:linear-gradient(90deg,rgba(24,26,23,0) 50%,rgba(24,26,23,.95) 89%),radial-gradient(ellipse 40% 46% at 47% 56%,rgba(0,0,0,.42),rgba(0,0,0,0)),linear-gradient(180deg,#ab987c,#5e5344 50%,#7a6a55)"></div></div></div><div class="t ti" style="left:1276.2px;top:739.2px;">PP_Cinema</div><div class="t dis" style="left:1285.2px;top:753.7px;">Base Color</div><div class="t dis" style="left:1285.2px;top:768.46px;">Metallic</div><div class="t dis" style="left:1285.2px;top:783.23px;">Specular</div><div class="t dis" style="left:1285.2px;top:797.99px;">Roughness</div><div class="t dis" style="left:1285.2px;top:812.76px;">Anisotropy</div><div class="t " style="left:1285.2px;top:827.52px;">Emissive Color</div><div class="t dis" style="left:1285.2px;top:842.29px;">Opacity</div><div class="t dis" style="left:1285.2px;top:857.05px;">Opacity Mask</div><div class="t dis" style="left:1285.2px;top:871.82px;">Normal</div><div class="t dis" style="left:1285.2px;top:886.58px;">Tangent</div><div class="t dis" style="left:1285.2px;top:901.35px;">World Position Offset</div><div class="t dis" style="left:1285.2px;top:916.12px;">Subsurface Color</div><div class="t dis" style="left:1285.2px;top:930.88px;">Custom Data 0</div><div class="t dis" style="left:1285.2px;top:945.64px;">Custom Data 1</div><div class="t dis" style="left:1285.2px;top:960.41px;">Ambient Occlusion</div><div class="t dis" style="left:1285.2px;top:975.17px;">Refraction (Disabled)</div><div class="t dis" style="left:1285.2px;top:989.94px;letter-spacing:-.12px">Pixel Depth Offset (Camera Vector)</div><div class="t dis" style="left:1285.2px;top:1004.7px;">Shading Model</div><div class="t dis" style="left:1285.2px;top:1019.47px;">Surface Thickness</div><div class="t dis" style="left:1285.2px;top:1034.23px;">Displacement</div><div class="t dis" style="left:1285.2px;top:1049px;">Front Material</div>
<svg class="layer" width="1407" height="1098"><path d="M175.1 47.2L176.8 49.2L178.5 47.2" fill="none" stroke="#e8e8e8" stroke-width="1.2" stroke-linecap="round" stroke-linejoin="round"/><circle cx="82" cy="66.8" r="2.1" fill="#060606" stroke="#2b2b2b" stroke-width="1"/><circle cx="173.8" cy="66.8" r="2.6" fill="#f4f4f4"/><path d="M176.6 65.3L178.9 66.8L176.6 68.3Z" fill="#e8e8e8"/><circle cx="173.8" cy="81.3" r="2.05" fill="#141414" stroke="#efefef" stroke-width="1.2"/><path d="M176.6 79.8L179.1 81.3L176.6 82.8Z" fill="#e8e8e8"/><circle cx="173.8" cy="95.9" r="2.05" fill="#141414" stroke="#efefef" stroke-width="1.2"/><path d="M176.6 94.4L179.1 95.9L176.6 97.4Z" fill="#e8e8e8"/><path d="M127.4 106.9L129.1 108.9L130.8 106.9" fill="none" stroke="#e8e8e8" stroke-width="1.2" stroke-linecap="round" stroke-linejoin="round"/><path d="M308.3 59L310 61L311.7 59" fill="none" stroke="#e8e8e8" stroke-width="1.2" stroke-linecap="round" stroke-linejoin="round"/><circle cx="259.8" cy="75" r="2.6" fill="#f4f4f4"/><path d="M262.6 73.5L264.9 75L262.6 76.5Z" fill="#e8e8e8"/><circle cx="307.5" cy="75" r="2.6" fill="#f4f4f4"/><path d="M310.3 73.5L312.6 75L310.3 76.5Z" fill="#e8e8e8"/><path d="M283.3 86.2L284.9 88.2L286.5 86.2" fill="none" stroke="#d0d0d0" stroke-width="1.2" stroke-linecap="round" stroke-linejoin="round"/><path d="M406.7 58.4L408.4 60.4L410.1 58.4" fill="none" stroke="#e8e8e8" stroke-width="1.2" stroke-linecap="round" stroke-linejoin="round"/><circle cx="353.2" cy="75.2" r="2.6" fill="#f4f4f4"/><path d="M356 73.7L358.3 75.2L356 76.7Z" fill="#e8e8e8"/><circle cx="405.6" cy="75.2" r="2.05" fill="#141414" stroke="#efefef" stroke-width="1.2"/><path d="M408.4 73.7L410.9 75.2L408.4 76.7Z" fill="#e8e8e8"/><path d="M204.1 194L205.8 196L207.5 194" fill="none" stroke="#e8e8e8" stroke-width="1.2" stroke-linecap="round" stroke-linejoin="round"/><circle cx="203.8" cy="213.8" r="2.6" fill="#f4f4f4"/><path d="M206.6 212.3L208.9 213.8L206.6 215.3Z" fill="#e8e8e8"/><path d="M204.1 248.8L205.8 250.8L207.5 248.8" fill="none" stroke="#e8e8e8" stroke-width="1.2" stroke-linecap="round" stroke-linejoin="round"/><circle cx="203.8" cy="268.8" r="2.6" fill="#f4f4f4"/><path d="M206.6 267.3L208.9 268.8L206.6 270.3Z" fill="#e8e8e8"/><path d="M477.4 232.2L479.1 230.2L480.8 232.2" fill="none" stroke="#e8e8e8" stroke-width="1.1" stroke-linecap="round" stroke-linejoin="round"/><circle cx="330.4" cy="246.1" r="2.6" fill="#f4f4f4"/><path d="M333.2 244.6L335.5 246.1L333.2 247.6Z" fill="#e8e8e8"/><circle cx="330.4" cy="260.5" r="2.6" fill="#f4f4f4"/><path d="M333.2 259L335.5 260.5L333.2 262Z" fill="#e8e8e8"/><circle cx="330.4" cy="275.8" r="2.6" fill="#f4f4f4"/><path d="M333.2 274.3L335.5 275.8L333.2 277.3Z" fill="#e8e8e8"/><circle cx="475.5" cy="246.1" r="2.6" fill="#f4f4f4"/><path d="M478.3 244.6L480.6 246.1L478.3 247.6Z" fill="#e8e8e8"/><path d="M402.7 332.6L404.4 330.6L406.1 332.6" fill="none" stroke="#d8d8d8" stroke-width="1.1" stroke-linecap="round" stroke-linejoin="round"/><path d="M501.2 386.6L502.9 384.6L504.6 386.6" fill="none" stroke="#e8e8e8" stroke-width="1.1" stroke-linecap="round" stroke-linejoin="round"/><circle cx="354.2" cy="401.4" r="2.6" fill="#f4f4f4"/><path d="M357 399.9L359.3 401.4L357 402.9Z" fill="#e8e8e8"/><circle cx="354.2" cy="416" r="2.6" fill="#f4f4f4"/><path d="M357 414.5L359.3 416L357 417.5Z" fill="#e8e8e8"/><circle cx="354.2" cy="430.4" r="2.6" fill="#f4f4f4"/><path d="M357 428.9L359.3 430.4L357 431.9Z" fill="#e8e8e8"/><circle cx="499.3" cy="401.4" r="2.6" fill="#f4f4f4"/><path d="M502.1 399.9L504.4 401.4L502.1 402.9Z" fill="#e8e8e8"/><path d="M426.5 488.4L428.2 486.4L429.9 488.4" fill="none" stroke="#d8d8d8" stroke-width="1.1" stroke-linecap="round" stroke-linejoin="round"/><path d="M182.7 380.4L184.4 382.4L186.1 380.4" fill="none" stroke="#e8e8e8" stroke-width="1.2" stroke-linecap="round" stroke-linejoin="round"/><circle cx="182" cy="400" r="2.6" fill="#f4f4f4"/><path d="M184.8 398.5L187.1 400L184.8 401.5Z" fill="#e8e8e8"/><circle cx="182" cy="414.4" r="2.05" fill="#141414" stroke="#efefef" stroke-width="1.2"/><path d="M184.8 412.9L187.3 414.4L184.8 415.9Z" fill="#e8e8e8"/><path d="M286.1 424.1L287.8 426.1L289.5 424.1" fill="none" stroke="#e8e8e8" stroke-width="1.2" stroke-linecap="round" stroke-linejoin="round"/><circle cx="244.9" cy="440.3" r="2.6" fill="#383838"/><path d="M247.5 438.8L249.5 440.3L247.5 441.8Z" fill="#383838"/><circle cx="244.9" cy="455.8" r="2.1" fill="#060606" stroke="#2b2b2b" stroke-width="1"/><circle cx="285.2" cy="440.2" r="2.6" fill="#f4f4f4"/><path d="M288 438.7L290.3 440.2L288 441.7Z" fill="#e8e8e8"/><path d="M286.1 486.7L287.8 488.7L289.5 486.7" fill="none" stroke="#e8e8e8" stroke-width="1.2" stroke-linecap="round" stroke-linejoin="round"/><circle cx="244.9" cy="502.7" r="2.6" fill="#383838"/><path d="M247.5 501.2L249.5 502.7L247.5 504.2Z" fill="#383838"/><circle cx="244.9" cy="517.9" r="2.1" fill="#060606" stroke="#2b2b2b" stroke-width="1"/><circle cx="285.2" cy="502.6" r="2.6" fill="#f4f4f4"/><path d="M288 501.1L290.3 502.6L288 504.1Z" fill="#e8e8e8"/><path d="M648.6 218.2L650.3 220.2L652 218.2" fill="none" stroke="#e8e8e8" stroke-width="1.2" stroke-linecap="round" stroke-linejoin="round"/><circle cx="555.5" cy="237.8" r="2.6" fill="#383838"/><path d="M558.1 236.3L560.1 237.8L558.1 239.3Z" fill="#383838"/><circle cx="647.3" cy="237.8" r="2.6" fill="#f4f4f4"/><path d="M650.1 236.3L652.4 237.8L650.1 239.3Z" fill="#e8e8e8"/><circle cx="647.3" cy="252.3" r="2.05" fill="#141414" stroke="#efefef" stroke-width="1.2"/><path d="M650.1 250.8L652.6 252.3L650.1 253.8Z" fill="#e8e8e8"/><circle cx="647.3" cy="266.9" r="2.05" fill="#141414" stroke="#efefef" stroke-width="1.2"/><path d="M650.1 265.4L652.6 266.9L650.1 268.4Z" fill="#e8e8e8"/><path d="M600.9 277.9L602.6 279.9L604.3 277.9" fill="none" stroke="#e8e8e8" stroke-width="1.2" stroke-linecap="round" stroke-linejoin="round"/><path d="M648.6 334.6L650.3 336.6L652 334.6" fill="none" stroke="#e8e8e8" stroke-width="1.2" stroke-linecap="round" stroke-linejoin="round"/><circle cx="555.5" cy="354.2" r="2.6" fill="#383838"/><path d="M558.1 352.7L560.1 354.2L558.1 355.7Z" fill="#383838"/><circle cx="647.3" cy="354.2" r="2.6" fill="#f4f4f4"/><path d="M650.1 352.7L652.4 354.2L650.1 355.7Z" fill="#e8e8e8"/><circle cx="647.3" cy="368.7" r="2.05" fill="#141414" stroke="#efefef" stroke-width="1.2"/><path d="M650.1 367.2L652.6 368.7L650.1 370.2Z" fill="#e8e8e8"/><circle cx="647.3" cy="383.3" r="2.05" fill="#141414" stroke="#efefef" stroke-width="1.2"/><path d="M650.1 381.8L652.6 383.3L650.1 384.8Z" fill="#e8e8e8"/><path d="M600.9 394.3L602.6 396.3L604.3 394.3" fill="none" stroke="#e8e8e8" stroke-width="1.2" stroke-linecap="round" stroke-linejoin="round"/><path d="M648.6 443.2L650.3 445.2L652 443.2" fill="none" stroke="#e8e8e8" stroke-width="1.2" stroke-linecap="round" stroke-linejoin="round"/><circle cx="555.5" cy="462.8" r="2.6" fill="#383838"/><path d="M558.1 461.3L560.1 462.8L558.1 464.3Z" fill="#383838"/><circle cx="647.3" cy="462.8" r="2.6" fill="#f4f4f4"/><path d="M650.1 461.3L652.4 462.8L650.1 464.3Z" fill="#e8e8e8"/><circle cx="647.3" cy="477.3" r="2.05" fill="#141414" stroke="#efefef" stroke-width="1.2"/><path d="M650.1 475.8L652.6 477.3L650.1 478.8Z" fill="#e8e8e8"/><circle cx="647.3" cy="491.9" r="2.05" fill="#141414" stroke="#efefef" stroke-width="1.2"/><path d="M650.1 490.4L652.6 491.9L650.1 493.4Z" fill="#e8e8e8"/><path d="M600.9 503.5L602.6 505.5L604.3 503.5" fill="none" stroke="#e8e8e8" stroke-width="1.2" stroke-linecap="round" stroke-linejoin="round"/><path d="M762.3 246.2L764 248.2L765.7 246.2" fill="none" stroke="#e8e8e8" stroke-width="1.2" stroke-linecap="round" stroke-linejoin="round"/><circle cx="725.4" cy="262.2" r="2.6" fill="#f4f4f4"/><path d="M728.2 260.7L730.5 262.2L728.2 263.7Z" fill="#e8e8e8"/><circle cx="761.5" cy="262.2" r="2.6" fill="#f4f4f4"/><path d="M764.3 260.7L766.6 262.2L764.3 263.7Z" fill="#e8e8e8"/><path d="M743.1 273.4L744.7 275.4L746.3 273.4" fill="none" stroke="#d0d0d0" stroke-width="1.2" stroke-linecap="round" stroke-linejoin="round"/><path d="M754.6 331L756.3 333L758 331" fill="none" stroke="#e8e8e8" stroke-width="1.2" stroke-linecap="round" stroke-linejoin="round"/><circle cx="718.7" cy="347" r="2.6" fill="#f4f4f4"/><path d="M721.5 345.5L723.8 347L721.5 348.5Z" fill="#e8e8e8"/><circle cx="753.8" cy="347" r="2.6" fill="#f4f4f4"/><path d="M756.6 345.5L758.9 347L756.6 348.5Z" fill="#e8e8e8"/><path d="M735.9 358.2L737.5 360.2L739.1 358.2" fill="none" stroke="#d0d0d0" stroke-width="1.2" stroke-linecap="round" stroke-linejoin="round"/><path d="M754.6 393.6L756.3 395.6L758 393.6" fill="none" stroke="#e8e8e8" stroke-width="1.2" stroke-linecap="round" stroke-linejoin="round"/><circle cx="718.7" cy="409.6" r="2.6" fill="#f4f4f4"/><path d="M721.5 408.1L723.8 409.6L721.5 411.1Z" fill="#e8e8e8"/><circle cx="753.8" cy="409.6" r="2.6" fill="#f4f4f4"/><path d="M756.6 408.1L758.9 409.6L756.6 411.1Z" fill="#e8e8e8"/><path d="M735.9 420.8L737.5 422.8L739.1 420.8" fill="none" stroke="#d0d0d0" stroke-width="1.2" stroke-linecap="round" stroke-linejoin="round"/><circle cx="881.6" cy="283.5" r="2.6" fill="#383838"/><path d="M884.2 282L886.2 283.5L884.2 285Z" fill="#383838"/><circle cx="881.6" cy="298.6" r="2.6" fill="#383838"/><path d="M884.2 297.1L886.2 298.6L884.2 300.1Z" fill="#383838"/><circle cx="881.6" cy="313.7" r="2.6" fill="#383838"/><path d="M884.2 312.2L886.2 313.7L884.2 315.2Z" fill="#383838"/><circle cx="927.8" cy="283.5" r="2.6" fill="#f4f4f4"/><path d="M930.6 282L932.9 283.5L930.6 285Z" fill="#e8e8e8"/><path d="M1058.05 253.4L1059.4 255.4L1060.75 253.4" fill="none" stroke="#c0c0c0" stroke-width="1.2" stroke-linecap="round" stroke-linejoin="round"/><circle cx="1006.4" cy="269.4" r="2.6" fill="#f4f4f4"/><path d="M1009.2 267.9L1011.5 269.4L1009.2 270.9Z" fill="#e8e8e8"/><circle cx="1056.4" cy="269.4" r="2.05" fill="#141414" stroke="#efefef" stroke-width="1.2"/><path d="M1059.2 267.9L1061.7 269.4L1059.2 270.9Z" fill="#e8e8e8"/><path d="M96.7 676.2L98.4 678.2L100.1 676.2" fill="none" stroke="#e8e8e8" stroke-width="1.2" stroke-linecap="round" stroke-linejoin="round"/><circle cx="96" cy="695.8" r="2.6" fill="#f4f4f4"/><path d="M98.8 694.3L101.1 695.8L98.8 697.3Z" fill="#e8e8e8"/><circle cx="96" cy="710.2" r="2.05" fill="#141414" stroke="#efefef" stroke-width="1.2"/><path d="M98.8 708.7L101.3 710.2L98.8 711.7Z" fill="#e8e8e8"/><path d="M166.7 680.4L168.4 682.4L170.1 680.4" fill="none" stroke="#e8e8e8" stroke-width="1.2" stroke-linecap="round" stroke-linejoin="round"/><circle cx="128.6" cy="696.3" r="2.6" fill="#383838"/><path d="M131.2 694.8L133.2 696.3L131.2 697.8Z" fill="#383838"/><circle cx="128.6" cy="712.7" r="2.1" fill="#060606" stroke="#2b2b2b" stroke-width="1"/><circle cx="165.8" cy="696.2" r="2.6" fill="#f4f4f4"/><path d="M168.6 694.7L170.9 696.2L168.6 697.7Z" fill="#e8e8e8"/><path d="M236.6 680.4L238.3 682.4L240 680.4" fill="none" stroke="#e8e8e8" stroke-width="1.2" stroke-linecap="round" stroke-linejoin="round"/><circle cx="198.5" cy="696.3" r="2.6" fill="#383838"/><path d="M201.1 694.8L203.1 696.3L201.1 697.8Z" fill="#383838"/><circle cx="198.5" cy="712.7" r="2.1" fill="#060606" stroke="#2b2b2b" stroke-width="1"/><circle cx="235.7" cy="696.2" r="2.6" fill="#f4f4f4"/><path d="M238.5 694.7L240.8 696.2L238.5 697.7Z" fill="#e8e8e8"/><path d="M334.3 688L336 690L337.7 688" fill="none" stroke="#e8e8e8" stroke-width="1.2" stroke-linecap="round" stroke-linejoin="round"/><circle cx="290.9" cy="704.7" r="2.6" fill="#383838"/><path d="M293.5 703.2L295.5 704.7L293.5 706.2Z" fill="#383838"/><circle cx="290.9" cy="720.3" r="2.1" fill="#060606" stroke="#2b2b2b" stroke-width="1"/><circle cx="333.4" cy="704.6" r="2.6" fill="#f4f4f4"/><path d="M336.2 703.1L338.5 704.6L336.2 706.1Z" fill="#e8e8e8"/><path d="M416.9 688.6L418.6 690.6L420.3 688.6" fill="none" stroke="#e8e8e8" stroke-width="1.2" stroke-linecap="round" stroke-linejoin="round"/><circle cx="392.4" cy="704.8" r="2.6" fill="#f4f4f4"/><path d="M395.2 703.3L397.5 704.8L395.2 706.3Z" fill="#e8e8e8"/><circle cx="415.4" cy="704.8" r="2.6" fill="#f4f4f4"/><path d="M418.2 703.3L420.5 704.8L418.2 706.3Z" fill="#e8e8e8"/><path d="M500.1 672.6L501.8 674.6L503.5 672.6" fill="none" stroke="#e8e8e8" stroke-width="1.2" stroke-linecap="round" stroke-linejoin="round"/><circle cx="462.1" cy="689.5" r="2.1" fill="#060606" stroke="#2b2b2b" stroke-width="1"/><circle cx="462.1" cy="706.3" r="2.1" fill="#060606" stroke="#2b2b2b" stroke-width="1"/><circle cx="462.1" cy="722.7" r="2.6" fill="#383838"/><path d="M464.7 721.2L466.7 722.7L464.7 724.2Z" fill="#383838"/><circle cx="499.2" cy="688.6" r="2.6" fill="#f4f4f4"/><path d="M502 687.1L504.3 688.6L502 690.1Z" fill="#e8e8e8"/><path d="M621.3 697.4L623 699.4L624.7 697.4" fill="none" stroke="#e8e8e8" stroke-width="1.2" stroke-linecap="round" stroke-linejoin="round"/><circle cx="592.6" cy="712.8" r="2.6" fill="#f4f4f4"/><path d="M595.4 711.3L597.7 712.8L595.4 714.3Z" fill="#e8e8e8"/><circle cx="620.2" cy="712.8" r="2.05" fill="#141414" stroke="#efefef" stroke-width="1.2"/><path d="M623 711.3L625.5 712.8L623 714.3Z" fill="#e8e8e8"/><path d="M111.05 827.2L112.4 829.2L113.75 827.2" fill="none" stroke="#c0c0c0" stroke-width="1.2" stroke-linecap="round" stroke-linejoin="round"/><circle cx="109.4" cy="842.9" r="2.6" fill="#f4f4f4"/><path d="M112.2 841.4L114.5 842.9L112.2 844.4Z" fill="#e8e8e8"/><path d="M245.85 951.8L247.2 953.8L248.55 951.8" fill="none" stroke="#c0c0c0" stroke-width="1.2" stroke-linecap="round" stroke-linejoin="round"/><circle cx="208" cy="967.6" r="2.6" fill="#f4f4f4"/><path d="M210.8 966.1L213.1 967.6L210.8 969.1Z" fill="#e8e8e8"/><circle cx="244.2" cy="967.6" r="2.6" fill="#f4f4f4"/><path d="M247 966.1L249.3 967.6L247 969.1Z" fill="#e8e8e8"/><path d="M332.05 952L333.4 954L334.75 952" fill="none" stroke="#c0c0c0" stroke-width="1.2" stroke-linecap="round" stroke-linejoin="round"/><circle cx="298.2" cy="967.4" r="2.6" fill="#f4f4f4"/><path d="M301 965.9L303.3 967.4L301 968.9Z" fill="#e8e8e8"/><circle cx="331.7" cy="967.4" r="2.6" fill="#f4f4f4"/><path d="M334.5 965.9L336.8 967.4L334.5 968.9Z" fill="#e8e8e8"/><path d="M314.5 978L315.9 980L317.3 978" fill="none" stroke="#aaa" stroke-width="1.2" stroke-linecap="round" stroke-linejoin="round"/><path d="M442.85 885.2L444.2 887.2L445.55 885.2" fill="none" stroke="#c0c0c0" stroke-width="1.2" stroke-linecap="round" stroke-linejoin="round"/><circle cx="441.5" cy="904" r="2.6" fill="#f4f4f4"/><path d="M444.3 902.5L446.6 904L444.3 905.5Z" fill="#e8e8e8"/><path d="M552.05 858.6L553.4 860.6L554.75 858.6" fill="none" stroke="#c0c0c0" stroke-width="1.2" stroke-linecap="round" stroke-linejoin="round"/><circle cx="550.4" cy="873" r="2.6" fill="#f4f4f4"/><path d="M553.2 871.5L555.5 873L553.2 874.5Z" fill="#e8e8e8"/><path d="M535.25 913.2L536.6 915.2L537.95 913.2" fill="none" stroke="#c0c0c0" stroke-width="1.2" stroke-linecap="round" stroke-linejoin="round"/><circle cx="484.6" cy="928.7" r="2.6" fill="#383838"/><path d="M487.2 927.2L489.2 928.7L487.2 930.2Z" fill="#383838"/><circle cx="484.6" cy="944.5" r="2.1" fill="#060606" stroke="#2b2b2b" stroke-width="1"/><circle cx="484.6" cy="960.7" r="2.6" fill="#383838"/><path d="M487.2 959.2L489.2 960.7L487.2 962.2Z" fill="#383838"/><circle cx="533.2" cy="928.6" r="2.6" fill="#f4f4f4"/><path d="M536 927.1L538.3 928.6L536 930.1Z" fill="#e8e8e8"/><path d="M638.05 827.3L639.4 829.3L640.75 827.3" fill="none" stroke="#c0c0c0" stroke-width="1.2" stroke-linecap="round" stroke-linejoin="round"/><circle cx="600.6" cy="843.3" r="2.6" fill="#383838"/><path d="M603.2 841.8L605.2 843.3L603.2 844.8Z" fill="#383838"/><circle cx="600.6" cy="857.9" r="2.6" fill="#383838"/><path d="M603.2 856.4L605.2 857.9L603.2 859.4Z" fill="#383838"/><circle cx="600.6" cy="872.7" r="2.6" fill="#383838"/><path d="M603.2 871.2L605.2 872.7L603.2 874.2Z" fill="#383838"/><circle cx="636" cy="843.2" r="2.6" fill="#f4f4f4"/><path d="M638.8 841.7L641.1 843.2L638.8 844.7Z" fill="#e8e8e8"/><path d="M817.05 827.3L818.4 829.3L819.75 827.3" fill="none" stroke="#c0c0c0" stroke-width="1.2" stroke-linecap="round" stroke-linejoin="round"/><circle cx="787.6" cy="843.3" r="2.6" fill="#383838"/><path d="M790.2 841.8L792.2 843.3L790.2 844.8Z" fill="#383838"/><circle cx="787.6" cy="857.9" r="2.6" fill="#383838"/><path d="M790.2 856.4L792.2 857.9L790.2 859.4Z" fill="#383838"/><circle cx="815" cy="843.2" r="2.6" fill="#f4f4f4"/><path d="M817.8 841.7L820.1 843.2L817.8 844.7Z" fill="#e8e8e8"/><path d="M763.85 928.4L765.2 930.4L766.55 928.4" fill="none" stroke="#c0c0c0" stroke-width="1.2" stroke-linecap="round" stroke-linejoin="round"/><circle cx="724.8" cy="944.7" r="2.1" fill="#060606" stroke="#2b2b2b" stroke-width="1"/><circle cx="724.8" cy="961.3" r="2.6" fill="#383838"/><path d="M727.4 959.8L729.4 961.3L727.4 962.8Z" fill="#383838"/><circle cx="761.8" cy="944.6" r="2.6" fill="#f4f4f4"/><path d="M764.6 943.1L766.9 944.6L764.6 946.1Z" fill="#e8e8e8"/><path d="M684.85 951.8L686.2 953.8L687.55 951.8" fill="none" stroke="#c0c0c0" stroke-width="1.2" stroke-linecap="round" stroke-linejoin="round"/><circle cx="683.2" cy="967.6" r="2.6" fill="#f4f4f4"/><path d="M686 966.1L688.3 967.6L686 969.1Z" fill="#e8e8e8"/><circle cx="1278.4" cy="757.4" r="2.0" fill="#101010" stroke="#3a3a3a" stroke-width="1"/><path d="M1281 756.2L1282.6 757.4L1281 758.6Z" fill="#333"/><circle cx="1278.4" cy="772.16" r="2.0" fill="#101010" stroke="#3a3a3a" stroke-width="1"/><path d="M1281 770.96L1282.6 772.16L1281 773.37Z" fill="#333"/><circle cx="1278.4" cy="786.93" r="2.0" fill="#101010" stroke="#3a3a3a" stroke-width="1"/><path d="M1281 785.73L1282.6 786.93L1281 788.13Z" fill="#333"/><circle cx="1278.4" cy="801.69" r="2.0" fill="#101010" stroke="#3a3a3a" stroke-width="1"/><path d="M1281 800.49L1282.6 801.69L1281 802.89Z" fill="#333"/><circle cx="1278.4" cy="816.46" r="2.0" fill="#101010" stroke="#3a3a3a" stroke-width="1"/><path d="M1281 815.26L1282.6 816.46L1281 817.66Z" fill="#333"/><circle cx="1278.4" cy="831.23" r="2.6" fill="#f4f4f4"/><path d="M1281.2 829.73L1283.5 831.23L1281.2 832.73Z" fill="#e8e8e8"/><circle cx="1278.4" cy="845.99" r="2.0" fill="#101010" stroke="#3a3a3a" stroke-width="1"/><path d="M1281 844.79L1282.6 845.99L1281 847.19Z" fill="#333"/><circle cx="1278.4" cy="860.75" r="2.0" fill="#101010" stroke="#3a3a3a" stroke-width="1"/><path d="M1281 859.55L1282.6 860.75L1281 861.96Z" fill="#333"/><circle cx="1278.4" cy="875.52" r="2.0" fill="#101010" stroke="#3a3a3a" stroke-width="1"/><path d="M1281 874.32L1282.6 875.52L1281 876.72Z" fill="#333"/><circle cx="1278.4" cy="890.28" r="2.0" fill="#101010" stroke="#3a3a3a" stroke-width="1"/><path d="M1281 889.08L1282.6 890.28L1281 891.49Z" fill="#333"/><circle cx="1278.4" cy="905.05" r="2.0" fill="#101010" stroke="#3a3a3a" stroke-width="1"/><path d="M1281 903.85L1282.6 905.05L1281 906.25Z" fill="#333"/><circle cx="1278.4" cy="919.82" r="2.0" fill="#101010" stroke="#3a3a3a" stroke-width="1"/><path d="M1281 918.62L1282.6 919.82L1281 921.02Z" fill="#333"/><circle cx="1278.4" cy="934.58" r="2.0" fill="#101010" stroke="#3a3a3a" stroke-width="1"/><path d="M1281 933.38L1282.6 934.58L1281 935.78Z" fill="#333"/><circle cx="1278.4" cy="949.35" r="2.0" fill="#101010" stroke="#3a3a3a" stroke-width="1"/><path d="M1281 948.14L1282.6 949.35L1281 950.55Z" fill="#333"/><circle cx="1278.4" cy="964.11" r="2.0" fill="#101010" stroke="#3a3a3a" stroke-width="1"/><path d="M1281 962.91L1282.6 964.11L1281 965.31Z" fill="#333"/><circle cx="1278.4" cy="978.88" r="2.0" fill="#101010" stroke="#3a3a3a" stroke-width="1"/><path d="M1281 977.67L1282.6 978.88L1281 980.08Z" fill="#333"/><circle cx="1278.4" cy="993.64" r="2.0" fill="#101010" stroke="#3a3a3a" stroke-width="1"/><path d="M1281 992.44L1282.6 993.64L1281 994.84Z" fill="#333"/><circle cx="1278.4" cy="1008.4" r="2.0" fill="#101010" stroke="#3a3a3a" stroke-width="1"/><path d="M1281 1007.2L1282.6 1008.4L1281 1009.61Z" fill="#333"/><circle cx="1278.4" cy="1023.17" r="2.0" fill="#101010" stroke="#3a3a3a" stroke-width="1"/><path d="M1281 1021.97L1282.6 1023.17L1281 1024.37Z" fill="#333"/><circle cx="1278.4" cy="1037.93" r="2.0" fill="#101010" stroke="#3a3a3a" stroke-width="1"/><path d="M1281 1036.73L1282.6 1037.93L1281 1039.13Z" fill="#333"/><circle cx="1278.4" cy="1052.7" r="2.0" fill="#101010" stroke="#3a3a3a" stroke-width="1"/><path d="M1281 1051.5L1282.6 1052.7L1281 1053.9Z" fill="#333"/></svg></div>
</body></html>
